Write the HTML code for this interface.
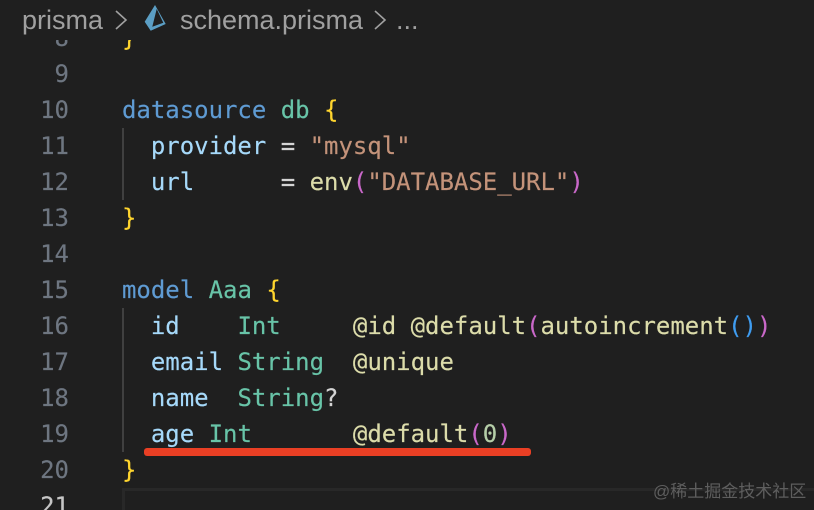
<!DOCTYPE html>
<html><head><meta charset="utf-8"><style>
html,body{margin:0;padding:0;background:#1f1f1f}
#r{position:relative;width:814px;height:510px;overflow:hidden;background:#1f1f1f;font-family:"DejaVu Sans Mono","Liberation Mono",monospace;font-size:24px;-webkit-font-smoothing:antialiased}
#c{position:absolute;left:0;top:1px;width:814px;height:510px;filter:blur(.35px)}
.l{position:absolute;left:122px;height:36px;line-height:36px;white-space:pre;color:#d4d4d4;letter-spacing:-.02px;-webkit-text-stroke:.15px currentColor}
.n{position:absolute;left:0;width:69px;text-align:right;height:36px;line-height:36px;color:#6e7681;white-space:pre;-webkit-text-stroke:.15px currentColor}
.k{color:#5f9bd3}.t{color:#68c4a8}.y{color:#ffd52e}.v{color:#a6d9fa}.f{color:#dcdcaa}.s{color:#c4937a}.p{color:#c968c9}.b{color:#3f9cf0}.d{color:#b5cea8}
.g{position:absolute;left:122px;width:2px;background:#404040}
#bc{position:absolute;left:0;top:0;width:814px;height:40px;background:#1f1f1f;font-family:"Liberation Sans",sans-serif;font-size:27px;color:#a0a0a0;z-index:3;filter:blur(.3px)}
#bc span{position:absolute;top:3px;line-height:34px;white-space:pre}
</style></head><body><div id="r">
<div id="c">
<div class="n" style="top:19px">8</div><div class="l" style="top:19px"><span class="y">}</span></div>
<div class="n" style="top:55px">9</div>
<div class="n" style="top:91px">10</div><div class="l" style="top:91px"><span class="k">datasource</span> <span class="t">db</span> <span class="y">{</span></div>
<div class="n" style="top:127px">11</div><div class="l" style="top:127px">  <span class="v">provider</span> = <span class="s">"mysql"</span></div>
<div class="n" style="top:163px">12</div><div class="l" style="top:163px">  <span class="v">url</span>      = <span class="f">env</span><span class="p">(</span><span class="s">"DATABASE_URL"</span><span class="p">)</span></div>
<div class="n" style="top:199px">13</div><div class="l" style="top:199px"><span class="y">}</span></div>
<div class="n" style="top:235px">14</div>
<div class="n" style="top:271px">15</div><div class="l" style="top:271px"><span class="k">model</span> <span class="t">Aaa</span> <span class="y">{</span></div>
<div class="n" style="top:307px">16</div><div class="l" style="top:307px">  <span class="v">id</span>    <span class="t">Int</span>     <span class="f">@id</span> <span class="f">@default</span><span class="p">(</span><span class="f">autoincrement</span><span class="b">()</span><span class="p">)</span></div>
<div class="n" style="top:343px">17</div><div class="l" style="top:343px">  <span class="v">email</span> <span class="t">String</span>  <span class="f">@unique</span></div>
<div class="n" style="top:379px">18</div><div class="l" style="top:379px">  <span class="v">name</span>  <span class="t">String</span>?</div>
<div class="n" style="top:415px">19</div><div class="l" style="top:415px">  <span class="v">age</span> <span class="t">Int</span>       <span class="f">@default</span><span class="p">(</span><span class="d">0</span><span class="p">)</span></div>
<div class="n" style="top:451px">20</div><div class="l" style="top:451px"><span class="y">}</span></div>
<div class="n" style="top:487px;color:#c6c6c6">21</div>
<div class="g" style="top:127px;height:72px"></div>
<div class="g" style="top:307px;height:144px"></div>
</div>
<div style="position:absolute;left:122px;top:488px;width:692px;height:3px;background:#282828"></div>
<div style="position:absolute;left:122px;top:488px;width:3px;height:22px;background:#282828"></div>
<div style="position:absolute;left:144px;top:448px;width:387px;height:8px;background:#e93f24;border-radius:3px"></div>
<div id="bc">
<span style="left:22px">prisma</span>
<svg style="position:absolute;left:114px;top:9px" width="14" height="22" viewBox="0 0 14 22"><path d="M2 2L12 11L2 20" fill="none" stroke="#a0a0a0" stroke-width="1.6"/></svg>
<svg style="position:absolute;left:143px;top:4px" width="25" height="28" viewBox="0 0 25 28"><path d="M1.700 17.700L12 1L22.700 20L7.700 26.700Z M13.700 5L9.300 22.700L20.300 18.700Z" fill="#5b9ec4" fill-rule="evenodd"/></svg>
<span style="left:180px">schema.prisma</span>
<svg style="position:absolute;left:373px;top:9px" width="14" height="22" viewBox="0 0 14 22"><path d="M2 2L12 11L2 20" fill="none" stroke="#a0a0a0" stroke-width="1.6"/></svg>
<span style="left:396px">...</span>
</div>
<div style="position:absolute;left:653px;top:480px;font-family:'Liberation Sans','Noto Sans CJK SC',sans-serif;font-size:17px;line-height:24px;color:#5e5e5e;white-space:pre;z-index:4">@稀土掘金技术社区</div>
</div></body></html>
